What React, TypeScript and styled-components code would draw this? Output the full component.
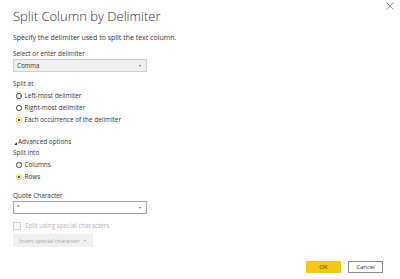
import React from "react";
import styled, { createGlobalStyle } from "styled-components";

const GlobalStyle = createGlobalStyle`
  html, body {
    margin: 0;
    padding: 0;
    background: #ffffff;
  }
  body {
    font-family: "Open Sans", "Noto Sans", Arial, sans-serif;
    color: #333;
  }
`;

const Dialog = styled.div`
  position: relative;
  width: 400px;
  height: 279px;
  box-sizing: border-box;
  padding: 6px 13px 0 13px;
  display: flex;
  flex-direction: column;
  background: #fff;
`;

const CloseButton = styled.div`
  position: absolute;
  top: 1px;
  right: 5px;
  width: 10px;
  height: 10px;
  display: flex;
  align-items: center;
  justify-content: center;
`;

const Title = styled.h1`
  margin: 0;
  font-size: 13px;
  font-weight: 300;
  color: #333;
  line-height: 20px;
`;

const Subtitle = styled.p`
  margin: 6px 0 0 0;
  font-size: 7px;
  line-height: 11px;
  color: #333;
`;

const Label = styled.div<{ $top?: number }>`
  margin-top: ${(p) => p.$top ?? 0}px;
  font-size: 6.4px;
  line-height: 10px;
  color: #333;
  display: flex;
  align-items: center;
`;

const DropBox = styled.div<{ $white?: boolean }>`
  width: 134px;
  height: 13px;
  box-sizing: border-box;
  border: 1px solid ${(p) => (p.$white ? "#a8a8a8" : "#d0d0d0")};
  background: ${(p) => (p.$white ? "#fff" : "#f0f0f0")};
  display: flex;
  align-items: center;
  justify-content: space-between;
  padding: 0 5px 0 3px;
  font-size: 6.2px;
  color: #333;
`;

const Caret = styled.span`
  width: 0;
  height: 0;
  border-left: 1.5px solid transparent;
  border-right: 1.5px solid transparent;
  border-top: 2px solid #666;
`;

const RadioList = styled.div`
  margin-top: 2px;
  display: flex;
  flex-direction: column;
  gap: 2px;
`;

const RadioRow = styled.div`
  display: flex;
  align-items: center;
  gap: 3px;
  font-size: 6.4px;
  line-height: 10px;
  color: #333;
  padding-left: 3px;
`;

const RadioDot = styled.span<{ $checked?: boolean }>`
  width: 5.5px;
  height: 5.5px;
  border-radius: 50%;
  box-sizing: border-box;
  border: 1.3px solid ${(p) => (p.$checked ? "#f2c811" : "#3a3a3a")};
  display: flex;
  align-items: center;
  justify-content: center;
  &::after {
    content: "";
    width: 1.6px;
    height: 1.6px;
    border-radius: 50%;
    background: ${(p) => (p.$checked ? "#333" : "transparent")};
  }
`;

const Expander = styled.span`
  width: 0;
  height: 0;
  margin-left: 1px;
  margin-right: 1px;
  margin-top: 2px;
  border-left: 3px solid transparent;
  border-bottom: 3px solid #444;
`;

const CheckRow = styled.div`
  margin-top: 7px;
  display: flex;
  align-items: center;
  gap: 4px;
  font-size: 6.3px;
  line-height: 10px;
  color: #b5b5b5;
`;

const CheckBox = styled.span`
  width: 6px;
  height: 6px;
  border: 1px solid #d3d3d3;
  background: #fff;
`;

const InsertButton = styled.div`
  margin-top: 3px;
  width: 80px;
  height: 13px;
  background: #f0f0f0;
  display: flex;
  align-items: center;
  gap: 4px;
  padding-left: 6px;
  box-sizing: border-box;
  font-size: 5.6px;
  color: #a8a8a8;
`;

const SmallCaret = styled(Caret)`
  border-top-color: #b0b0b0;
`;

const Footer = styled.div`
  margin-top: auto;
  margin-bottom: 6px;
  margin-right: 4px;
  display: flex;
  justify-content: flex-end;
  gap: 7px;
`;

const FooterButton = styled.div<{ $primary?: boolean }>`
  width: 35px;
  height: 12px;
  box-sizing: border-box;
  display: flex;
  align-items: center;
  justify-content: center;
  font-size: 6px;
  color: #333;
  background: ${(p) => (p.$primary ? "#f2c811" : "#fff")};
  border: 1px solid ${(p) => (p.$primary ? "#f2c811" : "#8a8a8a")};
`;

export default function App() {
  return (
    <>
      <GlobalStyle />
      <Dialog>
        <CloseButton>
          <svg width="8" height="8" viewBox="0 0 8 8">
            <path d="M0.5 0.5 L7.5 7.5 M7.5 0.5 L0.5 7.5" stroke="#8a8a8a" strokeWidth="0.9" />
          </svg>
        </CloseButton>
        <Title>Split Column by Delimiter</Title>
        <Subtitle>Specify the delimiter used to split the text column.</Subtitle>

        <Label $top={6}>Select or enter delimiter</Label>
        <DropBox>
          <span>Comma</span>
          <Caret />
        </DropBox>

        <Label $top={7}>Split at</Label>
        <RadioList>
          <RadioRow>
            <RadioDot />
            Left-most delimiter
          </RadioRow>
          <RadioRow>
            <RadioDot />
            Right-most delimiter
          </RadioRow>
          <RadioRow>
            <RadioDot $checked />
            Each occurrence of the delimiter
          </RadioRow>
        </RadioList>

        <Label $top={12}>
          <Expander />
          Advanced options
        </Label>
        <Label $top={1}>Split into</Label>
        <RadioList>
          <RadioRow>
            <RadioDot />
            Columns
          </RadioRow>
          <RadioRow>
            <RadioDot $checked />
            Rows
          </RadioRow>
        </RadioList>

        <Label $top={9}>Quote Character</Label>
        <DropBox $white>
          <span>"</span>
          <Caret />
        </DropBox>

        <CheckRow>
          <CheckBox />
          Split using special characters
        </CheckRow>
        <InsertButton>
          Insert special character
          <SmallCaret />
        </InsertButton>

        <Footer>
          <FooterButton $primary>OK</FooterButton>
          <FooterButton>Cancel</FooterButton>
        </Footer>
      </Dialog>
    </>
  );
}
